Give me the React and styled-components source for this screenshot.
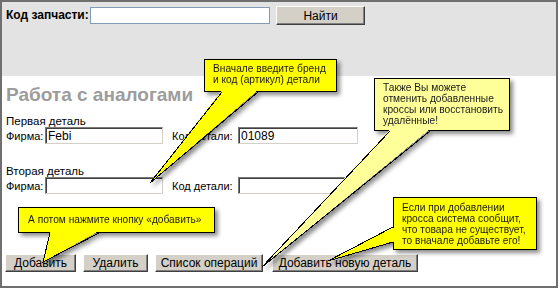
import React from 'react'
import styled, { createGlobalStyle } from 'styled-components'

const GlobalStyle = createGlobalStyle`
  body {
    margin: 0;
    background: #fff;
  }
`

// callouts in page coordinates; tail = [base1, tip, base2], side = where the tail leaves the box
const callouts = [
  {
    x: 204, y: 59, w: 133, h: 33, bg: '#ffff00', pad: '3px 0 0 8px',
    lines: ['Вначале введите бренд', 'и код (артикул) детали'],
    side: 'bottom', tail: [[222, 92], [150, 183], [258, 92]],
  },
  {
    x: 374, y: 78, w: 136, h: 53, bg: '#ffff99', pad: '3px 0 0 8px',
    lines: ['Также Вы можете', 'отменить добавленные', 'кроссы или восстановить', 'удалённые!'],
    side: 'bottom', tail: [[390, 131], [262, 267], [430, 131]],
  },
  {
    x: 18, y: 207, w: 197, h: 26, bg: '#ffff00', pad: '6px 0 0 9px',
    lines: ['А потом нажмите кнопку «добавить»'],
    side: 'bottom', tail: [[50, 233], [43, 262], [99, 233]],
  },
  {
    x: 393, y: 197, w: 144, h: 53, bg: '#ffff00', pad: '4px 0 0 8px',
    lines: ['Если при добавлении', 'кросса система сообщит,', 'что товара не существует,', 'то вначале добавьте его!'],
    side: 'left', tail: [[393, 227], [328, 261], [393, 242]],
  },
]

const Callout = ({ c }) => {
  const [a, tip, b] = c.tail
  const inset = (p) => (c.side === 'bottom' ? [p[0], p[1] - 2] : [p[0] + 2, p[1]])
  const fill = [inset(a), tip, inset(b)].map((p) => p.join(',')).join(' ')
  const edge = [a, tip, b].map((p) => p.join(',')).join(' ')
  return (
    <CalloutLayer>
      <Bubble
        $bg={c.bg}
        $pad={c.pad}
        style={{ left: c.x, top: c.y, width: c.w, height: c.h }}
      >
        {c.lines.map((l, i) => (
          <div key={i}>{l}</div>
        ))}
      </Bubble>
      <Tail width="560" height="290" shapeRendering="crispEdges">
        <polygon points={fill} fill={c.bg} />
        <polyline points={edge} fill="none" stroke="#000" strokeWidth="1" />
      </Tail>
    </CalloutLayer>
  )
}

const App = () => {
  return (
    <>
      <GlobalStyle />
      <Page>
        <SearchBar>
          <SearchLabel>Код запчасти:</SearchLabel>
          <SearchInput />
          <Button $w={89} $h={19}>Найти</Button>
        </SearchBar>
        <Content>
          <Title>Работа с аналогами</Title>
          <Section $top={10}>Первая деталь</Section>
          <FieldRow>
            <Label $w={39}>Фирма:</Label>
            <Field $w={118} defaultValue="Febi" />
            <Label $w={66} $gap={9}>Код детали:</Label>
            <Field $w={120} defaultValue="01089" />
          </FieldRow>
          <Section $top={21}>Вторая деталь</Section>
          <FieldRow>
            <Label $w={39}>Фирма:</Label>
            <Field $w={118} />
            <Label $w={66} $gap={9}>Код детали:</Label>
            <Field $w={120} />
          </FieldRow>
          <ButtonRow>
            <Button $w={71}>Добавить</Button>
            <Button $w={65}>Удалить</Button>
            <Button $w={108}>Список операций</Button>
            <Button $w={146} $gap={2}>Добавить новую деталь</Button>
          </ButtonRow>
        </Content>
        {callouts.map((c, i) => (
          <Callout key={i} c={c} />
        ))}
      </Page>
    </>
  )
}

export default App

const Page = styled.div`
  position: relative;
  width: 558px;
  height: 288px;
  box-sizing: border-box;
  border: 2px solid #6f6f6f;
  background: #fff;
  overflow: hidden;
  font-family: "Liberation Sans", Arial, sans-serif;
  font-size: 11.5px;
  color: #000;
`

const SearchBar = styled.div`
  height: 74px;
  box-sizing: border-box;
  background: #e3e3e3;
  display: flex;
  align-items: flex-start;
  padding: 4px 0 0 4px;
`

const SearchLabel = styled.span`
  font-weight: 700;
  font-size: 12px;
  line-height: 19px;
  width: 84px;
  white-space: nowrap;
`

const SearchInput = styled.input`
  width: 180px;
  height: 17px;
  box-sizing: border-box;
  border: 1px solid #7f9db9;
  background: #fff;
  margin: 1px 6px 0 0;
  padding: 0 2px;
  outline: none;
`

const Button = styled.button`
  width: ${(p) => p.$w}px;
  height: ${(p) => p.$h || 18}px;
  margin-left: ${(p) => p.$gap || 0}px;
  box-sizing: border-box;
  padding: 0;
  background: #d4d0c8;
  border: 1px solid;
  border-color: #fff #404040 #404040 #fff;
  box-shadow: inset -1px -1px 0 #808080;
  font-family: "Liberation Sans", Arial, sans-serif;
  font-size: 12px;
  color: #000;
  white-space: nowrap;
`

const Content = styled.div`
  padding: 0 0 0 4px;
`

const Title = styled.div`
  margin-top: 9px;
  font-size: 19px;
  line-height: 20px;
  font-weight: 700;
  color: #9c9c9c;
`

const Section = styled.div`
  margin-top: ${(p) => p.$top}px;
  line-height: 12px;
`

const FieldRow = styled.div`
  display: flex;
  align-items: center;
  height: 17px;
`

const Label = styled.span`
  width: ${(p) => p.$w}px;
  margin-left: ${(p) => p.$gap || 0}px;
  font-size: 11px;
  white-space: nowrap;
`

const Field = styled.input`
  width: ${(p) => p.$w}px;
  height: 17px;
  box-sizing: border-box;
  border: 1px solid;
  border-color: #7a7a7a #d4d0c8 #d4d0c8 #7a7a7a;
  box-shadow: inset 1px 1px 0 #404040;
  padding: 0 2px;
  font-family: "Liberation Sans", Arial, sans-serif;
  font-size: 12px;
  color: #000;
  background: #fff;
  outline: none;
`

const ButtonRow = styled.div`
  display: flex;
  gap: 7px;
  margin: 60px 0 0 -1px;
`

const CalloutLayer = styled.div`
  position: absolute;
  left: -2px;
  top: -2px;
  width: 560px;
  height: 290px;
  pointer-events: none;
  filter: drop-shadow(3px 3px 2px rgba(0, 0, 0, 0.45));
`

const Bubble = styled.div`
  position: absolute;
  box-sizing: border-box;
  border: 1px solid #000;
  background: ${(p) => p.$bg};
  padding: ${(p) => p.$pad};
  font-family: "Liberation Sans", Arial, sans-serif;
  font-size: 10.2px;
  line-height: 11px;
  color: #1a1a1a;
  white-space: nowrap;
`

const Tail = styled.svg`
  position: absolute;
  left: 0;
  top: 0;
`
